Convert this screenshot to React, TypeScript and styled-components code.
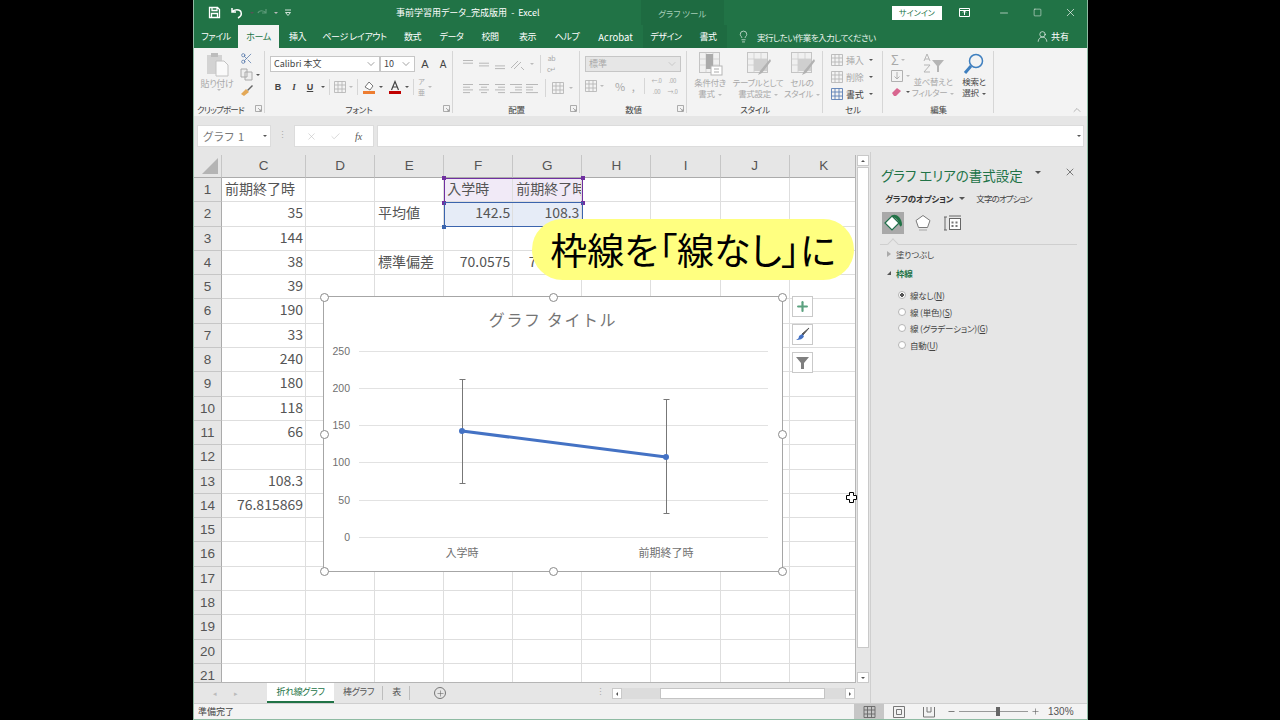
import * as React from "react";
import styled, { createGlobalStyle } from "styled-components";
import { Scissors, ChevronDown, ChevronUp, Lightbulb, UserRound, X, Minus, Square, Check, Plus } from "lucide-react";

const GREEN = "#217346";
const DIM = "#a9a9a9";

const GlobalStyle = createGlobalStyle`
  html, body { margin: 0; padding: 0; background: #000; }
  body {
    width: 1280px;
    height: 720px;
    overflow: hidden;
    font-family: "Noto Sans CJK JP", "Liberation Sans", sans-serif;
    font-feature-settings: "palt";
    color: #444;
  }
  * { box-sizing: border-box; }
`;

const Screen = styled.div`
  width: 1280px;
  height: 720px;
  display: flex;
  justify-content: flex-start;
  padding-left: 193px;
`;

const Frame = styled.div`
  width: 895px;
  height: 720px;
  display: flex;
  flex-direction: column;
  background: #e6e6e6;
  border-left: 1px solid #8fbba3;
  border-right: 1px solid #8fbba3;
  border-bottom: 1px solid #8fbba3;
`;

/* title bar + tabs */
const Head = styled.div`
  background: ${GREEN};
  color: #fff;
  height: 48px;
  flex: none;
  display: flex;
  flex-direction: column;
`;

const TitleRow = styled.div`
  height: 25px;
  display: flex;
  align-items: center;
`;

const QuickBar = styled.div`
  width: 203px;
  padding-left: 14px;
  display: flex;
  align-items: center;
  gap: 3px;
`;

const DocTitle = styled.div`
  width: 246px;
  font-size: 9px;
  white-space: pre;
`;

const ToolsLabel = styled.div`
  width: 84px;
  height: 25px;
  background: #1e6b41;
  font-size: 8.5px;
  color: #a5cdb7;
  line-height: 27px;
  text-align: center;
`;

const SignIn = styled.div`
  width: 50px;
  height: 14px;
  margin-left: 168px;
  background: #fff;
  color: ${GREEN};
  font-size: 8px;
  line-height: 14px;
  text-align: center;
`;

const WinButton = styled.div<{ $w: number }>`
  width: ${(p) => p.$w}px;
  display: flex;
  justify-content: center;
  align-items: center;
`;

const TabRow = styled.div`
  height: 23px;
  display: flex;
  align-items: stretch;
`;

const Tab = styled.div<{ $w: number; $active?: boolean; $tool?: boolean }>`
  width: ${(p) => p.$w}px;
  font-size: 9px;
  letter-spacing: -0.4px;
  text-align: center;
  line-height: 24px;
  white-space: pre;
  background: ${(p) => (p.$active ? "#f3f3f3" : p.$tool ? "#1e6b41" : "transparent")};
  color: ${(p) => (p.$active ? GREEN : "#fff")};
`;

const LatinTab = styled(Tab)`
  font-size: 9.5px;
  letter-spacing: 0;
`;

const TellMe = styled.div`
  display: flex;
  align-items: center;
  gap: 7px;
  font-size: 8.5px;
  letter-spacing: -0.5px;
  margin-left: 10px;
  color: #e9f3ed;
`;

const Share = styled.div`
  margin-left: auto;
  margin-right: 18px;
  display: flex;
  align-items: center;
  gap: 2px;
  font-size: 9px;
`;

/* ribbon */
const Ribbon = styled.div`
  height: 68px;
  flex: none;
  display: flex;
  background: #f3f3f3;
  padding-top: 3px;
  position: relative;
`;

const Group = styled.div<{ $w: number }>`
  width: ${(p) => p.$w}px;
  flex: none;
  display: flex;
  flex-direction: column;
  height: 65px;
  position: relative;
  &::after {
    content: "";
    position: absolute;
    right: 0;
    top: 0;
    width: 1px;
    height: 62px;
    background: #d6d6d6;
  }
`;

const GroupBody = styled.div`
  flex: 1;
  display: flex;
  min-height: 0;
`;

const GroupFoot = styled.div<{ $pr?: number }>`
  height: 14px;
  font-size: 8.5px;
  line-height: 15px;
  letter-spacing: -0.2px;
  color: #444;
  display: flex;
  align-items: center;
  justify-content: center;
  position: relative;
  white-space: nowrap;
  padding-right: ${(p) => p.$pr ?? 0}px;
`;

const ClipboardLabel = styled.span`
  letter-spacing: -0.8px;
`;

const Launcher = styled.svg`
  position: absolute;
  right: 3px;
  top: 3px;
`;

const Stack = styled.div<{ $gap?: number; $pt?: number; $pl?: number; $w?: number; $align?: string }>`
  display: flex;
  flex-direction: column;
  gap: ${(p) => p.$gap ?? 0}px;
  padding-top: ${(p) => p.$pt ?? 0}px;
  padding-left: ${(p) => p.$pl ?? 0}px;
  ${(p) => (p.$w ? `width: ${p.$w}px;` : "")}
  align-items: ${(p) => p.$align ?? "flex-start"};
`;

const Row = styled.div<{ $gap?: number }>`
  display: flex;
  align-items: center;
  gap: ${(p) => p.$gap ?? 0}px;
`;

const Label = styled.div<{ $dim?: boolean; $size?: number; $ml?: number }>`
  font-size: ${(p) => p.$size ?? 8.5}px;
  line-height: 11px;
  letter-spacing: -0.35px;
  margin-left: ${(p) => p.$ml ?? 0}px;
  color: ${(p) => (p.$dim ? DIM : "#444")};
  white-space: pre;
  text-align: center;
`;

const FieldBox = styled.div<{ $w: number }>`
  width: ${(p) => p.$w}px;
  height: 16px;
  background: #fff;
  border: 1px solid #c6c6c6;
  font-size: 9px;
  line-height: 14px;
  padding-left: 3px;
  color: #444;
  display: flex;
  align-items: center;
  justify-content: space-between;
  padding-right: 2px;
`;

const NumberBox = styled(FieldBox)`
  background: #e6e6e6;
  color: ${DIM};
`;

const Toggle = styled.div<{ $italic?: boolean; $under?: boolean; $serif?: boolean; $plain?: number }>`
  width: 16px;
  text-align: center;
  font-size: ${(p) => p.$plain ?? 9}px;
  font-weight: ${(p) => (p.$plain ? 400 : 700)};
  margin-left: ${(p) => (p.$plain ? 2 : 0)}px;
  font-family: ${(p) => (p.$serif ? '"Liberation Serif", serif' : '"Liberation Sans", sans-serif')};
  font-style: ${(p) => (p.$italic ? "italic" : "normal")};
  text-decoration: ${(p) => (p.$under ? "underline" : "none")};
  color: #444;
`;

const Sep = styled.div<{ $h?: number; $ml?: number }>`
  width: 1px;
  height: ${(p) => p.$h ?? 16}px;
  background: #d6d6d6;
  margin: 0 4px 0 ${(p) => p.$ml ?? 4}px;
`;

const Caret = styled.span<{ $dim?: boolean; $size?: number; $rotate?: number; $flush?: boolean; $ml?: number }>`
  display: inline-block;
  vertical-align: middle;
  width: 0;
  height: 0;
  margin-left: ${(p) => (p.$flush ? 0 : p.$ml ?? 3)}px;
  border-left: ${(p) => p.$size ?? 2}px solid transparent;
  border-right: ${(p) => p.$size ?? 2}px solid transparent;
  border-top: ${(p) => p.$size ?? 2}px solid ${(p) => (p.$dim ? "#bbb" : "#555")};
  transform: rotate(${(p) => p.$rotate ?? 0}deg);
`;

const Collapse = styled.div`
  position: absolute;
  right: 4px;
  bottom: 0;
  color: #777;
  display: flex;
`;

/* formula bar */
const FormulaBar = styled.div`
  height: 36px;
  flex: none;
  display: flex;
  align-items: flex-start;
  padding: 9px 3px 0 3px;
  background: #e6e6e6;
`;

const NameBox = styled.div`
  width: 74px;
  height: 22px;
  background: #fff;
  border: 1px solid #dcdcdc;
  font-size: 11px;
  letter-spacing: 1px;
  color: #777;
  display: flex;
  align-items: center;
  justify-content: space-between;
  padding: 0 3px 0 5px;
`;

const Dots = styled.div`
  width: 23px;
  color: #aaa;
  font-size: 9px;
  line-height: 20px;
  text-align: center;
`;

const FormulaButtons = styled.div`
  width: 80px;
  height: 22px;
  background: #fff;
  border: 1px solid #dcdcdc;
  display: flex;
  align-items: center;
  justify-content: space-around;
  padding: 0 4px;
  color: #bbb;
`;

const Fx = styled.span`
  font-family: "Liberation Serif", serif;
  font-style: italic;
  font-size: 10px;
  color: #555;
`;

const FormulaInput = styled.div`
  flex: 1;
  margin-left: 3px;
  height: 22px;
  background: #fff;
  border: 1px solid #dcdcdc;
  display: flex;
  justify-content: flex-end;
  align-items: center;
  padding-right: 2px;
  color: #666;
`;

/* middle */
const Middle = styled.div`
  flex: 1;
  min-height: 0;
  display: flex;
`;

const LeftSide = styled.div`
  width: 677px;
  flex: none;
  display: flex;
  flex-direction: column;
  border-right: 1px solid #cfcfcf;
`;

const SheetRow = styled.div`
  flex: 1;
  min-height: 0;
  display: flex;
  padding-top: 3px;
`;

const SheetArea = styled.div`
  width: 662px;
  flex: none;
  position: relative;
  overflow: visible;
  border-right: 1px solid #b5b5b5;
  border-bottom: 1px solid #b5b5b5;
  background: #fff;
`;

const Clip = styled.div`
  height: 100%;
  overflow: hidden;
`;

const Grid = styled.div`
  display: grid;
  grid-template-columns: 28px 84px repeat(8, 69.1px);
  grid-auto-rows: 24.3px;
  grid-template-rows: 23px;
  font-size: 14px;
  font-feature-settings: normal;
`;

const ColHead = styled.div`
  background: #e6e6e6;
  border-right: 1px solid #c6c6c6;
  border-bottom: 1px solid #ababab;
  text-align: center;
  font-size: 13.5px;
  line-height: 22px;
  color: #555;
  font-family: "Liberation Sans", sans-serif;
`;

const Corner = styled(ColHead)`
  position: relative;
  &::after {
    content: "";
    position: absolute;
    right: 3px;
    bottom: 3px;
    border-style: solid;
    border-width: 0 0 16px 16px;
    border-color: transparent transparent #b4b4b4 transparent;
  }
`;

const RowHead = styled.div`
  background: #e6e6e6;
  border-right: 1px solid #ababab;
  border-bottom: 1px solid #c6c6c6;
  text-align: center;
  font-size: 13.5px;
  line-height: 24px;
  color: #555;
  font-family: "Liberation Sans", sans-serif;
`;

const Cell = styled.div<{ $right?: boolean; $bg?: string }>`
  border-right: 1px solid #dedede;
  border-bottom: 1px solid #dedede;
  background: ${(p) => p.$bg ?? "#fff"};
  padding: 0 2px 0 3px;
  text-align: ${(p) => (p.$right ? "right" : "left")};
  line-height: 21px;
  color: #555;
  white-space: nowrap;
  overflow: ${(p) => (p.$right ? "visible" : "hidden")};
`;

const Range = styled.div<{ $color: string; $top: number; $h: number }>`
  position: absolute;
  left: 250px;
  width: 139px;
  top: ${(p) => p.$top}px;
  height: ${(p) => p.$h}px;
  border: 1.5px solid ${(p) => p.$color};
  pointer-events: none;
`;

const RangeDot = styled.div<{ $color: string; $x: string; $y: string }>`
  position: absolute;
  width: 4px;
  height: 4px;
  background: ${(p) => p.$color};
  ${(p) => p.$x}: -3px;
  ${(p) => p.$y}: -3px;
`;

const Callout = styled.div`
  position: absolute;
  left: 338px;
  top: 64px;
  width: 322px;
  height: 61px;
  border-radius: 31px;
  background: #ffff80;
  color: #000;
  font-size: 37px;
  line-height: 60px;
  text-align: center;
  white-space: nowrap;
  z-index: 3;
`;

const ChartBox = styled.div`
  position: absolute;
  left: 129px;
  top: 141px;
  width: 460px;
  height: 276px;
  background: #fff;
  border: 1px solid #a6a6a6;
  z-index: 2;
`;

const ChartSvg = styled.svg`
  display: block;
`;

const ChartTitle = styled.text`
  font-feature-settings: normal;
  letter-spacing: 1.6px;
`;

const Handle = styled.div<{ $x: number; $y: number }>`
  position: absolute;
  left: ${(p) => p.$x}%;
  top: ${(p) => p.$y}%;
  width: 9px;
  height: 9px;
  margin: -4.5px 0 0 -4.5px;
  border-radius: 50%;
  background: #fff;
  border: 1px solid #8a8a8a;
`;

const ChartTools = styled.div`
  position: absolute;
  left: 598px;
  top: 141px;
  display: flex;
  flex-direction: column;
  gap: 7px;
  z-index: 2;
`;

const ChartTool = styled.div`
  width: 21px;
  height: 21px;
  background: #fff;
  border: 1px solid #c9c9c9;
  display: flex;
  align-items: center;
  justify-content: center;
`;

const CellCursor = styled.svg`
  position: absolute;
  left: 652px;
  top: 337px;
  z-index: 4;
`;

const VScroll = styled.div`
  width: 13px;
  flex: none;
  display: flex;
  flex-direction: column;
  padding-left: 1px;
`;

const ScrollArrow = styled.div`
  height: 11px;
  flex: none;
  background: #fff;
  border: 1px solid #c9c9c9;
  display: flex;
  align-items: center;
  justify-content: center;
`;

const VThumb = styled.div`
  height: 481px;
  margin-top: 1px;
  background: #fff;
  border: 1px solid #c9c9c9;
  flex: none;
`;

const Spacer = styled.div`
  flex: 1;
`;

const TabBar = styled.div`
  height: 20px;
  flex: none;
  display: flex;
  align-items: stretch;
  font-size: 9px;
  letter-spacing: -0.4px;
  background: #e6e6e6;
`;

const SheetNav = styled.div`
  width: 73px;
  display: flex;
  align-items: center;
  justify-content: center;
  gap: 17px;
  padding-right: 10px;
  color: #bbb;
  font-size: 7px;
`;

const SheetTab = styled.div<{ $w: number; $active?: boolean; $sep?: boolean }>`
  width: ${(p) => p.$w}px;
  text-align: center;
  line-height: 18px;
  height: 20px;
  background: ${(p) => (p.$active ? "#fff" : "transparent")};
  color: ${(p) => (p.$active ? GREEN : "#555")};
  border-bottom: ${(p) => (p.$active ? `2px solid ${GREEN}` : "none")};
  position: relative;
  ${(p) =>
    p.$sep
      ? `&::after { content: ""; position: absolute; right: 0; top: 3px; height: 14px; width: 1px; background: #bdbdbd; }`
      : ""}
`;

const AddSheet = styled.div`
  width: 12px;
  height: 12px;
  border-radius: 50%;
  border: 1px solid #777;
  margin: 4px 0 0 24px;
  display: flex;
  align-items: center;
  justify-content: center;
  color: #666;
`;

const HDots = styled.div`
  margin-left: 148px;
  width: 13px;
  color: #aaa;
  font-size: 9px;
  line-height: 18px;
  text-align: center;
`;

const HScroll = styled.div`
  width: 243px;
  height: 11px;
  margin-top: 5px;
  margin-left: 5px;
  display: flex;
  background: #dcdcdc;
  flex: none;
`;

const HArrow = styled.div`
  width: 10px;
  background: #fff;
  border: 1px solid #c9c9c9;
  display: flex;
  align-items: center;
  justify-content: center;
`;

const HThumb = styled.div`
  width: 165px;
  margin-left: 38px;
  margin-right: 20px;
  background: #fff;
  border: 1px solid #c4c4c4;
`;

/* format pane */
const Pane = styled.div`
  flex: 1;
  min-width: 0;
  overflow: hidden;
  padding: 15px 10px 0 10px;
  background: #e6e6e6;
`;

const PaneHead = styled.div`
  display: flex;
  align-items: center;
  height: 14px;
`;

const PaneTitle = styled.div`
  font-size: 13.5px;
  line-height: 14px;
  color: ${GREEN};
  white-space: pre;
  margin-top: 1px;
`;

const PaneCaret = styled(Caret)`
  margin-left: 12px;
  margin-top: -4px;
`;

const PaneClose = styled(X)`
  margin-left: 23px;
  margin-top: -4px;
  flex: none;
`;

const PaneTabs = styled.div`
  display: flex;
  align-items: center;
  margin: 11px 0 0 4px;
  font-size: 8.5px;
  line-height: 12px;
  height: 12px;
  color: #444;
`;

const StrongTab = styled.span`
  font-weight: 700;
  color: #333;
  letter-spacing: -0.2px;
`;

const OtherTab = styled.span`
  margin-left: 11px;
  letter-spacing: -0.9px;
`;

const PaneIcons = styled.div`
  display: flex;
  align-items: center;
  gap: 8px;
  margin: 8px 0 0 1px;
`;

const PaneIcon = styled.div<{ $on?: boolean }>`
  width: 22px;
  height: 22px;
  background: ${(p) => (p.$on ? "#a9a9a9" : "transparent")};
  display: flex;
  align-items: center;
  justify-content: center;
`;

const PaneRule = styled.div`
  height: 1px;
  background: #cfcfcf;
  margin-top: 10px;
  width: 197px;
  margin-left: -1px;
  position: relative;
  &::after {
    content: "";
    position: absolute;
    left: 9px;
    top: -4px;
    width: 7px;
    height: 7px;
    background: #e6e6e6;
    border-left: 1px solid #cfcfcf;
    border-top: 1px solid #cfcfcf;
    transform: rotate(45deg);
  }
`;

const Section = styled.div<{ $on?: boolean; $mt: number }>`
  display: flex;
  align-items: center;
  gap: 5px;
  margin: ${(p) => p.$mt}px 0 0 6px;
  font-size: 8.5px;
  letter-spacing: -0.2px;
  line-height: 12px;
  font-weight: ${(p) => (p.$on ? 700 : 400)};
  color: ${(p) => (p.$on ? GREEN : "#444")};
`;

const Arrow = styled.span<{ $open?: boolean }>`
  width: 0;
  height: 0;
  border-style: solid;
  ${(p) =>
    p.$open
      ? "border-width: 0 0 4px 4px; border-color: transparent transparent #555 transparent;"
      : "border-width: 3px 0 3px 4px; border-color: transparent transparent transparent #aaa;"}
`;

const RadioList = styled.div`
  margin: 10px 0 0 17px;
  display: flex;
  flex-direction: column;
  gap: 4.7px;
`;

const RadioRow = styled.div`
  display: flex;
  align-items: center;
  gap: 4px;
  height: 12px;
  font-size: 8.5px;
  letter-spacing: -0.2px;
  color: #444;
`;

const Radio = styled.span<{ $on?: boolean }>`
  width: 8px;
  height: 8px;
  flex: none;
  border-radius: 50%;
  border: 1px solid #b5b5b5;
  background: ${(p) => (p.$on ? "radial-gradient(circle, #555 0 1.6px, #fff 2px)" : "#fff")};
`;

const Access = styled.u`
  text-underline-offset: 1px;
`;

/* status bar */
const StatusBar = styled.div`
  height: 16px;
  flex: none;
  display: flex;
  align-items: stretch;
  background: #f3f3f3;
  border-top: 1px solid #cfcfcf;
  font-size: 9px;
  color: #444;
`;

const StatusText = styled.div`
  width: 660px;
  padding-left: 4px;
  line-height: 15px;
`;

const ViewButton = styled.div<{ $on?: boolean }>`
  width: 30px;
  background: ${(p) => (p.$on ? "#c6c6c6" : "transparent")};
  display: flex;
  align-items: center;
  justify-content: center;
`;

const Zoom = styled.div`
  display: flex;
  align-items: center;
  margin-left: 3px;
  color: #555;
`;

const ZoomTrack = styled.div`
  width: 69px;
  height: 1px;
  margin: 0 3px;
  background: #999;
  position: relative;
`;

const ZoomThumb = styled.div`
  position: absolute;
  left: 37px;
  top: -4px;
  width: 4px;
  height: 9px;
  background: #666;
`;

const ZoomText = styled.div`
  margin-left: 8px;
  font-size: 10px;
  font-family: "Liberation Sans", sans-serif;
`;

/* small drawings */
const Launch = () => (
  <Launcher width="7" height="7" viewBox="0 0 7 7" fill="none" stroke="#999" strokeWidth="0.8">
    <path d="M.5 6.500V.5h6v6zM3 3l3 3M4 6h2V4" />
  </Launcher>
);

const Lines = ({ rows }: { rows: [number, number][] }) => (
  <svg width="14" height="13" viewBox="0 0 14 13" stroke="#b8b8b8" strokeWidth="1">
    {rows.map(([x1, x2], i) => (
      <line key={i} x1={x1} x2={x2} y1={2.5 + i * 2.7} y2={2.5 + i * 2.7} />
    ))}
  </svg>
);

const SheetGlyph = ({ w = 12, h = 12, color = "#b8b8b8" }: { w?: number; h?: number; color?: string }) => (
  <svg width={w} height={h} viewBox="0 0 12 12" fill="none" stroke={color} strokeWidth="0.9">
    <path d="M.5.5h11v11H.5zM.5 4h11M.5 8h11M4 .5v11M8 .5v11" />
  </svg>
);

const StyleIcon = ({ variant }: { variant: number }) => (
  <svg width="26" height="26" viewBox="0 0 26 26" fill="none">
    <rect x="2.5" y="1.5" width="20" height="20" fill="#f0f0f0" stroke="#c4c4c4" />
    <path d="M2.500 8h20M2.500 14h20M9 1.500v20M16 1.500v20" stroke="#cdcdcd" strokeWidth=".8" />
    {variant === 0 ? (
      <>
        <rect x="9" y="3" width="7" height="15" fill="#aaa" />
        <rect x="14" y="15" width="11" height="9" fill="#fff" stroke="#b5b5b5" />
        <path d="M17 18h5M17 21h5" stroke="#aaa" />
      </>
    ) : (
      <>
        <rect x="9" y="8" width="13" height="12" fill="#cfcfcf" />
        <path d="M25 8L15 20l-2 4 4-2L26 10z" fill="#b2b2b2" />
      </>
    )}
  </svg>
);

const CELLS: Record<number, { c?: string; cLeft?: boolean; e?: string; f?: string; fLeft?: boolean; g?: string; gLeft?: boolean }> = {
  1: { c: "前期終了時", cLeft: true, f: "入学時", fLeft: true, g: "前期終了時", gLeft: true },
  2: { c: "35", e: "平均値", f: "142.5", g: "108.3" },
  3: { c: "144" },
  4: { c: "38", e: "標準偏差", f: "70.0575", g: "76.8159" },
  5: { c: "39" },
  6: { c: "190" },
  7: { c: "33" },
  8: { c: "240" },
  9: { c: "180" },
  10: { c: "118" },
  11: { c: "66" },
  13: { c: "108.3" },
  14: { c: "76.815869" },
};

const cellBg = (row: number) => (row === 1 ? "#f1eaf7" : row === 2 ? "#e6ecf7" : undefined);

const Sheet = () => {
  const rows = Array.from({ length: 21 }, (_, i) => i + 1);
  return (
    <Grid>
      <Corner />
      {["C", "D", "E", "F", "G", "H", "I", "J", "K"].map((c) => (
        <ColHead key={c}>{c}</ColHead>
      ))}
      {rows.map((r) => {
        const d = CELLS[r] ?? {};
        return (
          <React.Fragment key={r}>
            <RowHead>{r}</RowHead>
            <Cell $right={!d.cLeft}>{d.c}</Cell>
            <Cell />
            <Cell>{d.e}</Cell>
            <Cell $right={!d.fLeft} $bg={cellBg(r)}>{d.f}</Cell>
            <Cell $right={!d.gLeft} $bg={cellBg(r)}>{d.g}</Cell>
            <Cell />
            <Cell />
            <Cell />
            <Cell />
          </React.Fragment>
        );
      })}
    </Grid>
  );
};

const Chart = () => {
  const ticks = [
    ["250", 54.5],
    ["200", 91.5],
    ["150", 128.5],
    ["100", 165.5],
    ["50", 203.5],
    ["0", 240.5],
  ] as const;
  return (
    <ChartSvg width="458" height="274" viewBox="0 0 458 274">
      <ChartTitle x="229" y="29" textAnchor="middle" fontSize="16" fill="#757575">
        グラフ タイトル
      </ChartTitle>
      {ticks.map(([t, y]) => (
        <React.Fragment key={t}>
          <line x1="35" x2="444" y1={y} y2={y} stroke="#e2e2e2" />
          <text x="26" y={y + 3} textAnchor="end" fontSize="10.500" fill="#707070" fontFamily="Liberation Sans">
            {t}
          </text>
        </React.Fragment>
      ))}
      <path d="M138.500 82v105M135.500 82.500h6M135.500 186.500h6M342.500 102v115M339.500 102.500h6M339.500 216.500h6" stroke="#777" fill="none" />
      <path d="M138 134L342 160" stroke="#4472c4" strokeWidth="3" fill="none" strokeLinecap="round" />
      <circle cx="138" cy="134" r="3" fill="#4472c4" />
      <circle cx="342" cy="160" r="3" fill="#4472c4" />
      <text x="138" y="260" textAnchor="middle" fontSize="11" fill="#707070">入学時</text>
      <text x="342" y="260" textAnchor="middle" fontSize="11" fill="#707070">前期終了時</text>
    </ChartSvg>
  );
};

const App = () => (
  <Screen>
    <GlobalStyle />
    <Frame>
      <Head>
        <TitleRow>
          <QuickBar>
            <svg width="13" height="13" viewBox="0 0 13 13" fill="none" stroke="#fff" strokeWidth="1.3">
              <path d="M1.500 1.500h8l2 2v8h-10zM4 1.500v3h5v-3M3.500 11.500v-4h6v4" />
            </svg>
            <svg width="14" height="13" viewBox="0 0 14 13" fill="none" stroke="#fff" strokeWidth="1.500" style={{ marginLeft: 6 }}>
              <path d="M2 2v4h4M2 6c2-3 8-3 9 0 1 3-1 5-3 6" />
            </svg>
            <Caret />
            <svg width="13" height="13" viewBox="0 0 13 13" fill="none" stroke="#5d9a79" strokeWidth="1.200" style={{ marginLeft: -2 }}>
              <path d="M11 3v4H7M11 7C9 4 4 4 3 7" />
            </svg>
            <Caret $dim />
            <svg width="9" height="8" viewBox="0 0 9 8" fill="none" stroke="#cfe3d8" style={{ marginLeft: 3 }}>
              <path d="M1 1h6M1.500 3.500L4 6.500l2.500-3z" />
            </svg>
          </QuickBar>
          <DocTitle>事前学習用データ_完成版用  -  Excel</DocTitle>
          <ToolsLabel>グラフ ツール</ToolsLabel>
          <SignIn>サインイン</SignIn>
          <WinButton $w={46}>
            <svg width="11" height="9" viewBox="0 0 11 9" fill="none" stroke="#fff">
              <path d="M.5.5h10v8H.5zM5.500 7V3M4 4.500L5.500 3 7 4.500M.5 2.500h10" />
            </svg>
          </WinButton>
          <WinButton $w={34}><Minus size={12} strokeWidth={1.2} /></WinButton>
          <WinButton $w={33}><Square size={9} strokeWidth={1.300} /></WinButton>
          <WinButton $w={33}><X size={13} strokeWidth={1.200} /></WinButton>
        </TitleRow>
        <TabRow>
          <Tab $w={44}>ファイル</Tab>
          <Tab $w={41} $active>ホーム</Tab>
          <Tab $w={37}>挿入</Tab>
          <Tab $w={77}>ページ レイアウト</Tab>
          <Tab $w={39}>数式</Tab>
          <Tab $w={39}>データ</Tab>
          <Tab $w={38}>校閲</Tab>
          <Tab $w={37}>表示</Tab>
          <Tab $w={42}>ヘルプ</Tab>
          <LatinTab $w={55}>Acrobat</LatinTab>
          <Tab $w={46} $tool>デザイン</Tab>
          <Tab $w={38} $tool>書式</Tab>
          <TellMe>
            <Lightbulb size={13} strokeWidth={1.300} />
            実行したい作業を入力してください
          </TellMe>
          <Share>
            <UserRound size={13} strokeWidth={1.200} />
            共有
          </Share>
        </TabRow>
      </Head>

      <Ribbon>
        <Group $w={71}>
          <GroupBody>
            <Stack $w={46} $pt={1} $align="center">
              <svg width="26" height="26" viewBox="0 0 26 26">
                <rect x="3" y="3" width="15" height="19" fill="#d3d3d3" />
                <rect x="7" y="1" width="7" height="4" fill="#bdbdbd" />
                <path d="M12 9h8l4 4v11H12z" fill="#fafafa" stroke="#c2c2c2" />
              </svg>
              <Label $dim $size={9}>貼り付け</Label>
              <Caret $dim />
            </Stack>
            <Stack $pt={1} $gap={3}>
              <Scissors size={13} color="#4a6fa5" strokeWidth={1.300} />
              <Row>
                <svg width="13" height="13" viewBox="0 0 13 13" fill="#eee" stroke="#aaa">
                  <path d="M1 1h6v8H1zM5 4h7v8H5z" />
                </svg>
                <Caret />
              </Row>
              <svg width="13" height="13" viewBox="0 0 13 13">
                <path d="M7 6l5-5 1 1-5 5z" fill="#666" />
                <path d="M1 10l5-5 3 3-5 4z" fill="#e3a857" />
              </svg>
            </Stack>
          </GroupBody>
          <GroupFoot $pr={18}>
            <ClipboardLabel>クリップボード</ClipboardLabel>
            <Launch />
          </GroupFoot>
        </Group>

        <Group $w={188}>
          <GroupBody>
            <Stack $pl={5} $pt={5} $gap={4}>
              <Row $gap={0}>
                <FieldBox $w={110}>Calibri 本文<ChevronDown size={12} strokeWidth={1} /></FieldBox>
                <FieldBox $w={35}>10<ChevronDown size={12} strokeWidth={1} /></FieldBox>
                <Toggle $plain={11}>A</Toggle>
                <Toggle $plain={10}>A</Toggle>
              </Row>
              <Row>
                <Toggle>B</Toggle>
                <Toggle $italic $serif>I</Toggle>
                <Toggle $under>U</Toggle>
                <Caret />
                <Sep />
                <SheetGlyph />
                <Caret $dim />
                <Sep />
                <svg width="14" height="14" viewBox="0 0 14 14">
                  <path d="M3 7l4-5 4 4-3 4z" fill="#fff" stroke="#777" />
                  <rect x="1" y="11" width="12" height="3" fill="#ed7d31" />
                </svg>
                <Caret />
                <svg width="14" height="14" viewBox="0 0 14 14" style={{ marginLeft: 5 }}>
                  <path d="M3.500 10L7 1.500 10.500 10M5 7h4" fill="none" stroke="#444" strokeWidth="1.200" />
                  <rect x="1" y="11" width="12" height="3" fill="#c00000" />
                </svg>
                <Caret />
                <Sep />
                <Label $dim $size={7}>ア{"\n"}亜</Label>
                <Caret $dim />
              </Row>
            </Stack>
          </GroupBody>
          <GroupFoot>
            フォント
            <Launch />
          </GroupFoot>
        </Group>

        <Group $w={127}>
          <GroupBody>
            <Stack $pl={8} $pt={2} $gap={4}>
              <Row $gap={2}>
                <Lines rows={[[2, 12], [2, 12], [99, 99]]} />
                <Lines rows={[[99, 99], [2, 12], [2, 12]]} />
                <Lines rows={[[99, 99], [99, 99], [2, 12], [2, 12]]} />
                <svg width="16" height="13" viewBox="0 0 16 13" fill="none" stroke="#b8b8b8">
                  <path d="M2 10L9 3M5 11l7-7M12 9l3 3" />
                </svg>
                <Caret $dim />
                <Sep $h={18} />
                <Label $dim $size={7}>ab{"\n"}c↵</Label>
              </Row>
              <Row $gap={2}>
                <Lines rows={[[2, 12], [2, 9], [2, 12], [2, 9]]} />
                <Lines rows={[[2, 12], [4, 10], [2, 12], [4, 10]]} />
                <Lines rows={[[2, 12], [5, 12], [2, 12], [5, 12]]} />
                <Lines rows={[[1, 13], [6, 13], [6, 13], [1, 13]]} />
                <Lines rows={[[1, 13], [1, 8], [1, 8], [1, 13]]} />
                <Sep $h={18} />
                <SheetGlyph />
                <Caret $dim />
              </Row>
            </Stack>
          </GroupBody>
          <GroupFoot>
            配置
            <Launch />
          </GroupFoot>
        </Group>

        <Group $w={107}>
          <GroupBody>
            <Stack $pl={5} $pt={5} $gap={3}>
              <NumberBox $w={96}>標準<ChevronDown size={12} strokeWidth={1} color="#aaa" /></NumberBox>
              <Row>
                <SheetGlyph />
                <Caret $dim />
                <Label $dim $size={11} $ml={11}>%</Label>
                <Label $dim $size={11} $ml={7}>,</Label>
                <Sep $ml={9} />
                <Label $dim $size={6} $ml={3}>←.0{"\n"}.00</Label>
                <Label $dim $size={6} $ml={6}>.00{"\n"}→.0</Label>
              </Row>
            </Stack>
          </GroupBody>
          <GroupFoot>
            数値
            <Launch />
          </GroupFoot>
        </Group>

        <Group $w={136}>
          <GroupBody>
            <Stack $w={46} $align="center">
              <StyleIcon variant={0} />
              <Label $dim>条件付き{"\n"}書式<Caret $dim /></Label>
            </Stack>
            <Stack $w={50} $align="center">
              <StyleIcon variant={1} />
              <Label $dim>テーブルとして{"\n"}書式設定<Caret $dim /></Label>
            </Stack>
            <Stack $w={38} $align="center">
              <StyleIcon variant={1} />
              <Label $dim>セルの{"\n"}スタイル<Caret $dim /></Label>
            </Stack>
          </GroupBody>
          <GroupFoot>スタイル</GroupFoot>
        </Group>

        <Group $w={60}>
          <GroupBody>
            <Stack $pl={8} $pt={3} $gap={5}>
              <Row $gap={3}><SheetGlyph /><Label $dim $size={9}>挿入</Label><Caret /></Row>
              <Row $gap={3}><SheetGlyph /><Label $dim $size={9}>削除</Label><Caret /></Row>
              <Row $gap={3}><SheetGlyph color="#5b7fb5" /><Label $size={9}>書式</Label><Caret /></Row>
            </Stack>
          </GroupBody>
          <GroupFoot>セル</GroupFoot>
        </Group>

        <Group $w={111}>
          <GroupBody>
            <Stack $pl={8} $pt={3} $gap={5} $w={26}>
              <Row><Label $dim $size={13}>Σ</Label><Caret $dim /></Row>
              <Row>
                <svg width="12" height="12" viewBox="0 0 12 12" fill="none" stroke="#b0b0b0">
                  <path d="M.5.5h11v11H.5zM6 2v7M3.500 6.500L6 9l2.500-2.500" />
                </svg>
                <Caret $dim />
              </Row>
              <Row>
                <svg width="12" height="10" viewBox="0 0 12 10">
                  <path d="M1 6l5-5 4 3-5 5H3z" fill="#d8668f" />
                </svg>
                <Caret />
              </Row>
            </Stack>
            <Stack $w={48} $align="center" $pt={1}>
              <svg width="24" height="24" viewBox="0 0 24 24">
                <path d="M9 20H3l6-7H3M3 9l3-7 3 7M4 7h4" fill="none" stroke="#b5b5b5" />
                <path d="M11 8h12l-5 6v6h-2v-6z" fill="#b5b5b5" />
              </svg>
              <Label $dim>並べ替えと{"\n"}フィルター<Caret $dim /></Label>
            </Stack>
            <Stack $w={34} $align="center" $pt={1}>
              <svg width="24" height="24" viewBox="0 0 24 24" fill="none" stroke="#3f7fbf">
                <circle cx="14" cy="9" r="6.500" strokeWidth="1.500" />
                <path d="M9 14l-6 7" strokeWidth="3" />
              </svg>
              <Label>検索と{"\n"}選択<Caret /></Label>
            </Stack>
          </GroupBody>
          <GroupFoot>編集</GroupFoot>
        </Group>
        <Collapse><ChevronUp size={12} strokeWidth={1} /></Collapse>
      </Ribbon>

      <FormulaBar>
        <NameBox>
          グラフ 1
          <Caret />
        </NameBox>
        <Dots>⋮</Dots>
        <FormulaButtons>
          <X size={11} strokeWidth={1.200} />
          <Check size={11} strokeWidth={1.200} />
          <Fx>fx</Fx>
        </FormulaButtons>
        <FormulaInput><Caret /></FormulaInput>
      </FormulaBar>

      <Middle>
        <LeftSide>
          <SheetRow>
            <SheetArea>
              <Clip>
                <Sheet />
              </Clip>
              <Range $color="#7030a0" $top={23} $h={25}>
                <RangeDot $color="#7030a0" $x="left" $y="top" />
                <RangeDot $color="#7030a0" $x="right" $y="top" />
                <RangeDot $color="#7030a0" $x="left" $y="bottom" />
                <RangeDot $color="#7030a0" $x="right" $y="bottom" />
              </Range>
              <Range $color="#3b64ad" $top={47} $h={25}>
                <RangeDot $color="#3b64ad" $x="left" $y="bottom" />
              </Range>
              <Callout>枠線を「線なし」に</Callout>
              <ChartBox>
                <Chart />
                <Handle $x={0} $y={0} />
                <Handle $x={50} $y={0} />
                <Handle $x={100} $y={0} />
                <Handle $x={0} $y={50} />
                <Handle $x={100} $y={50} />
                <Handle $x={0} $y={100} />
                <Handle $x={50} $y={100} />
                <Handle $x={100} $y={100} />
              </ChartBox>
              <ChartTools>
                <ChartTool><Plus size={15} strokeWidth={3.500} color="#5ba17f" /></ChartTool>
                <ChartTool>
                  <svg width="15" height="15" viewBox="0 0 15 15">
                    <path d="M14 1L8 8l-1-1z" fill="#555" stroke="#555" />
                    <path d="M7 7l2 2c-1 3-4 4-8 4 2-1 3-2 3-4z" fill="#4472c4" />
                  </svg>
                </ChartTool>
                <ChartTool>
                  <svg width="15" height="15" viewBox="0 0 15 15">
                    <path d="M1 2h13L9 8v6H6V8z" fill="#7f7f7f" />
                  </svg>
                </ChartTool>
              </ChartTools>
              <CellCursor width="11" height="11" viewBox="0 0 11 11">
                <path d="M3.500.5h4v3h3v4h-3v3h-4v-3h-3v-4h3z" fill="#fff" stroke="#000" />
              </CellCursor>
            </SheetArea>
            <VScroll>
              <ScrollArrow><Caret $flush $rotate={180} /></ScrollArrow>
              <VThumb />
              <Spacer />
              <ScrollArrow><Caret $flush /></ScrollArrow>
            </VScroll>
          </SheetRow>
          <TabBar>
            <SheetNav><span>◂</span><span>▸</span></SheetNav>
            <SheetTab $w={67} $active>折れ線グラフ</SheetTab>
            <SheetTab $w={49} $sep>棒グラフ</SheetTab>
            <SheetTab $w={27} $sep>表</SheetTab>
            <AddSheet><Plus size={9} strokeWidth={1.500} /></AddSheet>
            <HDots>⋮</HDots>
            <HScroll>
              <HArrow><Caret $flush $rotate={90} /></HArrow>
              <HThumb />
              <HArrow><Caret $flush $rotate={-90} /></HArrow>
            </HScroll>
          </TabBar>
        </LeftSide>

        <Pane>
          <PaneHead>
            <PaneTitle>グラフ エリアの書式設定</PaneTitle>
            <PaneCaret $size={3} />
            <PaneClose size={12} strokeWidth={1.500} color="#555" />
          </PaneHead>
          <PaneTabs>
            <StrongTab>グラフのオプション</StrongTab>
            <Caret $size={3} $ml={6} />
            <OtherTab>文字のオプション</OtherTab>
          </PaneTabs>
          <PaneIcons>
            <PaneIcon $on>
              <svg width="20" height="20" viewBox="0 0 20 20">
                <path d="M2 10l7-7 7 7-7 7z" fill="#fff" stroke="#1f6f4a" strokeWidth="1.200" />
                <path d="M8 4c1-3 5-3 8 0 2 2 3 5 3 8-1 2-2 2-3-1 0-3-3-6-6-7z" fill={GREEN} />
              </svg>
            </PaneIcon>
            <PaneIcon>
              <svg width="18" height="18" viewBox="0 0 18 18" fill="#fff" stroke="#7a7a7a">
                <path d="M9 1.500l7 5-2.500 7h-9L2 6.500z" />
                <path d="M5 16h8" stroke="#bbb" strokeWidth="1.500" />
              </svg>
            </PaneIcon>
            <PaneIcon>
              <svg width="18" height="18" viewBox="0 0 18 18" fill="none" stroke="#666">
                <path d="M5 2h12M1 3v13M0 3h3M0 16h3" />
                <rect x="5.500" y="4.500" width="11" height="11" fill="#fff" />
                <path d="M7.500 7.500h2v2h-2zM11.500 7.500h2v2h-2zM7.500 11h2v2h-2zM11.500 11h2v2h-2z" fill="#777" stroke="none" />
              </svg>
            </PaneIcon>
          </PaneIcons>
          <PaneRule />
          <Section $mt={3}><Arrow />塗りつぶし</Section>
          <Section $mt={7} $on><Arrow $open />枠線</Section>
          <RadioList>
            <RadioRow><Radio $on /><span>線なし(<Access>N</Access>)</span></RadioRow>
            <RadioRow><Radio /><span>線 (単色)(<Access>S</Access>)</span></RadioRow>
            <RadioRow><Radio /><span>線 (グラデーション)(<Access>G</Access>)</span></RadioRow>
            <RadioRow><Radio /><span>自動(<Access>U</Access>)</span></RadioRow>
          </RadioList>
        </Pane>
      </Middle>

      <StatusBar>
        <StatusText>準備完了</StatusText>
        <ViewButton $on><SheetGlyph w={13} h={12} color="#666" /></ViewButton>
        <ViewButton>
          <svg width="12" height="12" viewBox="0 0 12 12" fill="none" stroke="#777">
            <path d="M.5.5h11v11H.5zM3.500 3.500h5v5h-5z" />
          </svg>
        </ViewButton>
        <ViewButton>
          <svg width="12" height="12" viewBox="0 0 12 12" fill="none" stroke="#777">
            <path d="M.5 1v10h11V1M4 1v5h4V1" />
          </svg>
        </ViewButton>
        <Zoom>
          <Minus size={9} strokeWidth={2} />
          <ZoomTrack><ZoomThumb /></ZoomTrack>
          <Plus size={9} strokeWidth={1.500} />
          <ZoomText>130%</ZoomText>
        </Zoom>
      </StatusBar>
    </Frame>
  </Screen>
);

export default App;
